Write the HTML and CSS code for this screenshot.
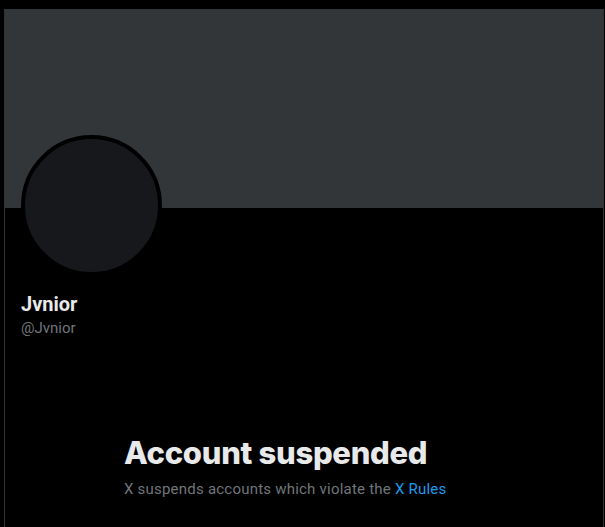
FILE: index.html
```html
<!DOCTYPE html>
<html lang="en">
<head>
<meta charset="utf-8">
<title>Jvnior (@Jvnior) / X</title>
<link rel="stylesheet" href="styles.css">
</head>
<body>
<div class="page">
  <main class="column">
    <div class="banner"></div>
    <div class="profile-head">
      <div class="avatar-row">
        <div class="avatar"></div>
      </div>
      <div class="names">
        <div class="name">Jvnior</div>
        <div class="handle">@Jvnior</div>
      </div>
    </div>
    <section class="empty-state">
      <h1 class="empty-title">Account suspended</h1>
      <p class="empty-text">X suspends accounts which violate the <a class="link" href="#">X Rules</a></p>
    </section>
  </main>
</div>
</body>
</html>
```
FILE: styles.css
```css
* { box-sizing: border-box; }
html, body {
  margin: 0;
  background: #000;
  height: 100%;
  overflow: hidden;
}
body {
  font-family: "Roboto", "Liberation Sans", sans-serif;
  color: #e7e9ea;
}
.page {
  padding: 9px 0 0 4px;
  height: 100%;
}
.column {
  width: 600px;
  height: 100%;
  border-left: 1px solid #2f3336;
  border-right: 1px solid #2f3336;
}
.banner {
  height: 199px;
  background: #333639;
}
.profile-head {
  padding: 12px 16px 0 16px;
}
.avatar-row {
  display: flex;
  margin-bottom: 12px;
}
.avatar {
  width: 141px;
  height: 141px;
  margin-top: -85px;
  border-radius: 50%;
  border: 4px solid #000;
  background: #16181c;
}
.names {
  margin-top: 16px;
}
.name {
  font-size: 20px;
  line-height: 24px;
  font-weight: 700;
  color: #e7e9ea;
}
.handle {
  margin-top: 2px;
  font-size: 15px;
  line-height: 20px;
  color: #71767b;
}
.empty-state {
  width: 400px;
  margin: 0 auto;
  padding: 97px 20px 0;
}
.empty-title {
  margin: 0 0 8px;
  font-family: "Inter", "Roboto", sans-serif;
  font-size: 31px;
  line-height: 36px;
  font-weight: 800;
  color: #e7e9ea;
  letter-spacing: -0.3px;
}
.empty-text {
  margin: 0;
  font-size: 15px;
  line-height: 20px;
  letter-spacing: 0.22px;
  color: #71767b;
}
.link {
  color: #1d9bf0;
  text-decoration: none;
}
```
